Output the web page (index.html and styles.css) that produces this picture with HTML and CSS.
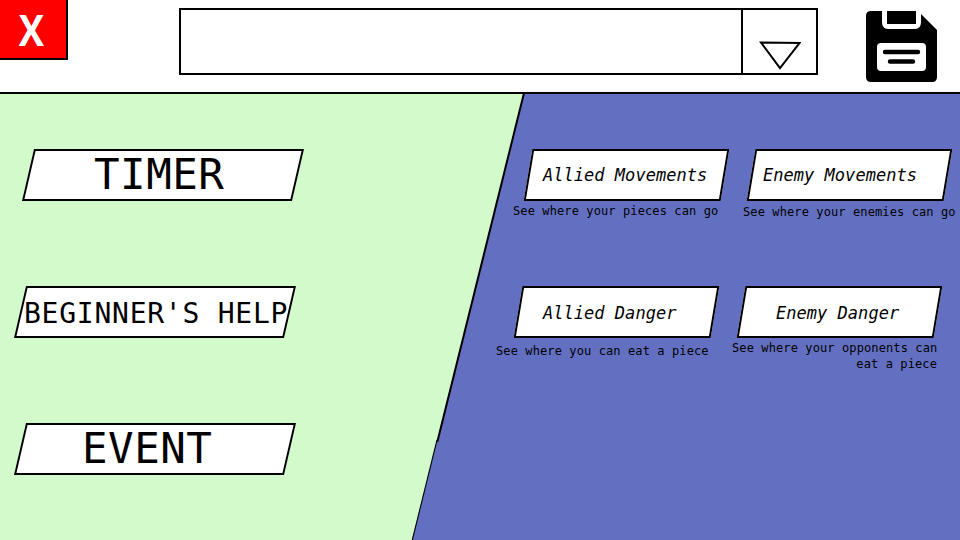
FILE: index.html
```html
<!DOCTYPE html>
<html lang="en">
<head>
<meta charset="utf-8">
<title>Settings</title>
<link rel="stylesheet" href="styles.css">
</head>
<body>
<header class="topbar">
  <button class="close"><span>X</span></button>
  <div class="select">
    <div class="select-value"></div>
    <div class="select-arrow">
      <svg width="42" height="30" viewBox="0 0 42 30"><path d="M2 2.5 40.5 3 21 28Z" fill="none" stroke="#000" stroke-width="2"/></svg>
    </div>
  </div>
  <svg class="save" width="72" height="72" viewBox="0 0 72 72">
    <path d="M5 0H52L71 19V66Q71 71 66 71H5Q0 71 0 66V5Q0 0 5 0Z"/>
    <path d="M16 0H55V11Q55 18 49 18H22Q16 18 16 11Z" fill="#fff"/>
    <path d="M21 0H50V13H21Z"/>
    <rect x="11" y="32" width="49" height="28" rx="4" fill="#fff"/>
    <path d="M19 41H52M24 50.5H47" stroke="#000" stroke-width="4.4" stroke-linecap="round"/>
  </svg>
</header>
<main class="panels">
  <svg class="backdrop" width="960" height="446" viewBox="0 0 960 446">
    <path d="M524 0H960V446H412Z" fill="#6370c2"/>
    <path d="M524 -1 437.3 348" stroke="#000" stroke-width="2"/>
    <path d="M437 346 412.3 446" stroke="#000" stroke-width="1.1"/>
  </svg>
  <section class="modes">
    <button class="slant large timer"><span>TIMER</span></button>
    <button class="slant medium help"><span>BEGINNER'S HELP</span></button>
    <button class="slant large event"><span>EVENT</span></button>
  </section>
  <section class="options">
    <article class="card allied-moves">
      <button class="slant option"><span>Allied Movements</span></button>
      <p>See where your pieces can go</p>
    </article>
    <article class="card enemy-moves">
      <button class="slant option"><span>Enemy Movements</span></button>
      <p>See where your enemies can go</p>
    </article>
    <article class="card allied-danger">
      <button class="slant option"><span>Allied Danger</span></button>
      <p>See where you can eat a piece</p>
    </article>
    <article class="card enemy-danger">
      <button class="slant option"><span>Enemy Danger</span></button>
      <p>See where your opponents can<br>eat a piece</p>
    </article>
  </section>
</main>
</body>
</html>
```
FILE: styles.css
```css
* { box-sizing: border-box; }
body {
  margin: 0;
  width: 960px;
  height: 540px;
  overflow: hidden;
  background: #fff;
  color: #000;
  font-family: "DejaVu Sans Mono", monospace;
}
button { border: 0; background: none; padding: 0; font: inherit; color: inherit; }
svg { display: block; }

.topbar {
  display: flex;
  align-items: flex-start;
  height: 94px;
  border-bottom: 2px solid #000;
}
.close {
  width: 68px;
  height: 60px;
  background: #f00;
  border-right: 2px solid #000;
  border-bottom: 2px solid #000;
  color: #fff;
  font: bold 43px/58px "Open Sans", sans-serif;
  padding: 1px 4px 0 0;
}
.close span { display: inline-block; transform: scaleX(0.88); }
.select {
  display: flex;
  width: 639px;
  height: 67px;
  margin: 8px 0 0 111px;
  border: 2px solid #000;
}
.select-value { flex: 1; border-right: 2px solid #000; }
.select-arrow { width: 73px; padding: 30px 0 0 16px; }
.save { margin: 11px 0 0 48px; }

.panels {
  position: relative;
  display: grid;
  grid-template-columns: 496px 464px;
  height: 446px;
  background: #d3faca;
}
.backdrop { position: absolute; left: 0; top: 0; }

.modes {
  position: relative;
  display: flex;
  flex-direction: column;
  gap: 85px;
  padding-top: 55px;
}
.slant {
  position: relative;
  display: flex;
  align-items: center;
  height: 52px;
  white-space: pre;
}
.slant::before {
  content: "";
  position: absolute;
  inset: 0;
  background: #fff;
  border: 2px solid #000;
  transform: skewX(-13deg);
}
.slant span { position: relative; }
.modes .slant { width: 270px; margin-left: 20px; }
.modes .timer { margin-left: 28px; }
.large { font-size: 42.5px; letter-spacing: 0.5px; padding-bottom: 2px; }
.timer { padding-left: 66px; }
.event { padding-left: 62px; }
.medium { font-size: 28px; letter-spacing: 0.75px; padding: 2px 0 0 4px; }

.options {
  position: relative;
  display: grid;
  grid-template-columns: 236px 228px;
  grid-template-rows: 137px 137px;
  padding-top: 55px;
}
.option {
  width: 197px;
  font-size: 17px;
  font-style: italic;
  letter-spacing: 0.03px;
}
.option::before { transform: skewX(-9.5deg); }
.card p {
  margin: 0;
  font-size: 12px;
  line-height: 16px;
  letter-spacing: 0.11px;
  white-space: nowrap;
}
.allied-moves .slant { margin-left: 32px; padding-left: 15px; }
.allied-moves p { margin: 2px 0 0 17px; }
.enemy-moves .slant { margin-left: 19px; padding-left: 12px; }
.enemy-moves p { margin: 3px 0 0 11px; }
.allied-danger .slant { margin-left: 22px; padding: 2px 0 0 25px; }
.allied-danger p { margin: 5px 0 0; }
.enemy-danger .slant { margin-left: 9px; padding: 2px 0 0 35px; }
.enemy-danger p { width: 205px; margin-top: 2px; text-align: right; }
```
